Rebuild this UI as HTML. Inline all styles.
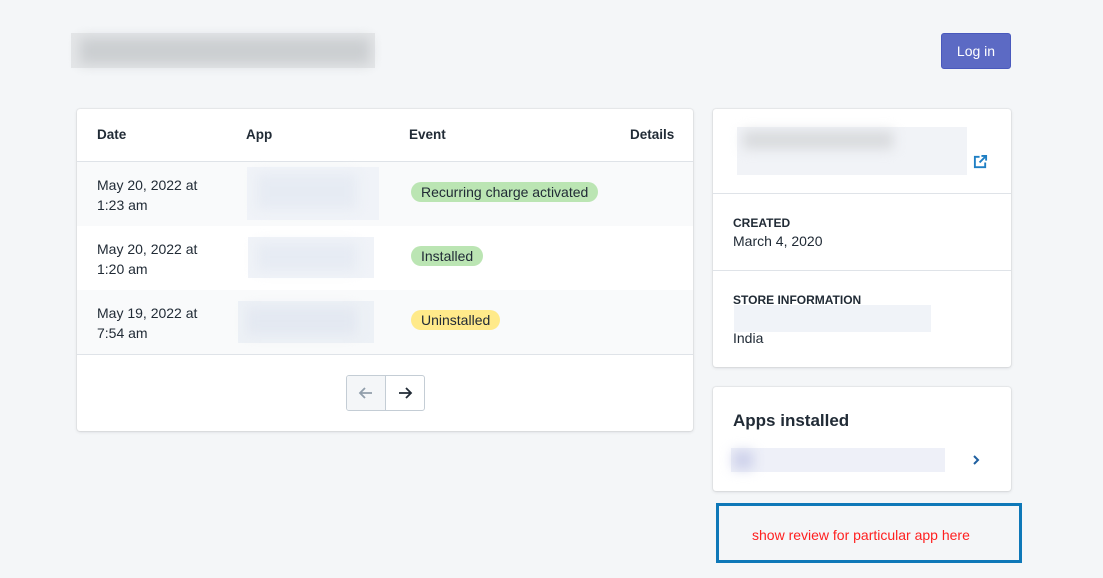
<!DOCTYPE html>
<html><head><style>
body{margin:0;width:1103px;height:578px;background:#f4f6f8;font-family:"Liberation Sans",sans-serif;color:#212b36;position:relative;overflow:hidden;font-size:14px}
.a{position:absolute}
.card{position:absolute;background:#fff;border-radius:3px;box-shadow:0 0 0 1px rgba(63,63,68,.05),0 1px 3px rgba(63,63,68,.15)}
.blur{position:absolute;filter:blur(6px)}
.badge{position:absolute;border-radius:10px;padding:0 10px;height:20px;line-height:20px;font-size:14px}
</style></head><body>
<div class="a" style="left:71px;top:33px;width:304px;height:35px;background:#e4e6e8"></div>
<div class="blur" style="left:80px;top:38px;width:290px;height:26px;background:#cbced1"></div>
<div class="a" style="left:941px;top:33px;width:68px;height:34px;background:#5c6ac4;border:1px solid #4959bd;border-radius:3px;color:#fff;text-align:center;line-height:34px;font-size:14px">Log in</div>

<div class="card" style="left:77px;top:109px;width:616px;height:322px;overflow:hidden">
 <div class="a" style="left:0;top:52px;width:616px;height:1px;background:#dfe3e8"></div>
 <div class="a" style="left:20px;top:18px;font-weight:bold;font-size:13.5px">Date</div>
 <div class="a" style="left:169px;top:18px;font-weight:bold;font-size:13.5px">App</div>
 <div class="a" style="left:332px;top:18px;font-weight:bold;font-size:13.5px">Event</div>
 <div class="a" style="left:553px;top:18px;font-weight:bold;font-size:13.5px">Details</div>
 <div class="a" style="left:0;top:53px;width:616px;height:64px;background:#f9fafb"></div>
 <div class="a" style="left:0;top:181px;width:616px;height:64px;background:#f9fafb"></div>
 <div class="a" style="left:0;top:245px;width:616px;height:1px;background:#dfe3e8"></div>
 <div class="a" style="left:20px;top:66px;line-height:20px">May 20, 2022 at<br>1:23 am</div>
 <div class="a" style="left:20px;top:130px;line-height:20px">May 20, 2022 at<br>1:20 am</div>
 <div class="a" style="left:20px;top:194px;line-height:20px">May 19, 2022 at<br>7:54 am</div>
 <div class="a" style="left:170px;top:58px;width:132px;height:53px;background:#f0f3f8"></div>
 <div class="blur" style="left:180px;top:65px;width:100px;height:35px;background:#e6ebf3"></div>
 <div class="a" style="left:171px;top:128px;width:126px;height:41px;background:#f0f3f8"></div>
 <div class="blur" style="left:180px;top:134px;width:100px;height:28px;background:#e6ebf3"></div>
 <div class="a" style="left:161px;top:192px;width:136px;height:42px;background:#edf1f6"></div>
 <div class="blur" style="left:170px;top:198px;width:110px;height:28px;background:#e3e8f1"></div>
 <div class="badge" style="left:334px;top:73px;background:#bbe5b3">Recurring charge activated</div>
 <div class="badge" style="left:334px;top:137px;background:#bbe5b3">Installed</div>
 <div class="badge" style="left:334px;top:201px;background:#ffea8a">Uninstalled</div>
 <div class="a" style="left:269px;top:266px;width:77px;height:34px;border:1px solid #c4cdd5;border-radius:3px;overflow:hidden">
  <div class="a" style="left:0;top:0;width:38px;height:34px;background:#f4f6f8;border-right:1px solid #c4cdd5"></div>
  <svg class="a" style="left:11px;top:9px" width="16" height="16" viewBox="0 0 16 16"><path d="M14 8H2M7 3L2 8l5 5" stroke="#919eab" stroke-width="1.8" fill="none"/></svg>
  <svg class="a" style="left:50px;top:9px" width="16" height="16" viewBox="0 0 16 16"><path d="M2 8h12M9 3l5 5-5 5" stroke="#212b36" stroke-width="1.8" fill="none"/></svg>
 </div>
</div>

<div class="card" style="left:713px;top:109px;width:298px;height:258px">
 <div class="a" style="left:24px;top:18px;width:230px;height:48px;background:#f1f3f7"></div>
 <div class="blur" style="left:30px;top:22px;width:150px;height:18px;background:#d8dadd"></div>
 <svg class="a" style="left:260px;top:45px" width="15" height="15" viewBox="0 0 16 16"><path d="M7 3H2v11h11V9M9 2h5v5M14 2L7 9" stroke="#1f7fc4" stroke-width="2" fill="none"/></svg>
 <div class="a" style="left:0;top:84px;width:298px;height:1px;background:#dfe3e8"></div>
 <div class="a" style="left:20px;top:107px;font-size:12px;font-weight:bold">CREATED</div>
 <div class="a" style="left:20px;top:124px">March 4, 2020</div>
 <div class="a" style="left:0;top:161px;width:298px;height:1px;background:#dfe3e8"></div>
 <div class="a" style="left:20px;top:184px;font-size:12px;font-weight:bold">STORE INFORMATION</div>
 <div class="a" style="left:21px;top:196px;width:197px;height:27px;background:#f0f3f8"></div>
 <div class="a" style="left:20px;top:221px">India</div>
</div>

<div class="card" style="left:713px;top:387px;width:298px;height:104px">
 <div class="a" style="left:20px;top:24px;font-size:17px;font-weight:bold">Apps installed</div>
 <div class="a" style="left:18px;top:61px;width:214px;height:24px;background:#eef0f8"></div>
 <div class="blur" style="left:20px;top:64px;width:20px;height:18px;background:#ccd0ea"></div>
 <svg class="a" style="left:258px;top:67px" width="10" height="12" viewBox="0 0 10 12"><path d="M3 2l4 4-4 4" stroke="#1f5fa0" stroke-width="2" fill="none"/></svg>
</div>

<div class="a" style="left:716px;top:503px;width:300px;height:54px;border:3px solid #0e78b8"></div>
<div class="a" style="left:752px;top:527px;color:#ff1f1f;font-size:14px">show review for particular app here</div>
</body></html>
